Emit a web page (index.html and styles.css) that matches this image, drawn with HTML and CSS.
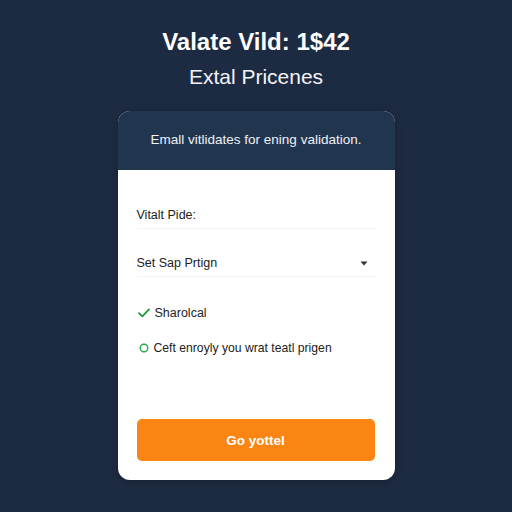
FILE: index.html
```html
<!DOCTYPE html>
<html>
<head>
<meta charset="utf-8">
<link rel="stylesheet" href="styles.css">
</head>
<body>
<div class="page">
  <h1 class="title">Valate Vild: 1$42</h1>
  <p class="subtitle">Extal Pricenes</p>
  <div class="card">
    <div class="card-head">Emall vitlidates for ening validation.</div>
    <div class="card-body">
      <div class="field">Vitalt Pide:</div>
      <div class="field select">
        <span>Set Sap Prtign</span>
        <svg class="chev" width="8" height="5" viewBox="0 0 8 5"><path d="M0.5 0.5 L4 4.5 L7.5 0.5 Z" fill="#333"/></svg>
      </div>
      <div class="check-row">
        <svg width="12" height="10" viewBox="0 0 12 10"><path d="M1 5.2 L4.3 8.4 L11 1.4" fill="none" stroke="#1f9d3a" stroke-width="1.8" stroke-linecap="round" stroke-linejoin="round"/></svg>
        <span>Sharolcal</span>
      </div>
      <div class="check-row circle-row">
        <svg width="10" height="10" viewBox="0 0 10 10"><circle cx="5" cy="5" r="3.8" fill="none" stroke="#2aa84a" stroke-width="1.4"/></svg>
        <span>Ceft enroyly you wrat teatl prigen</span>
      </div>
      <button class="btn">Go yottel</button>
    </div>
  </div>
</div>
</body>
</html>
```
FILE: styles.css
```css
html, body {
  margin: 0;
  padding: 0;
  background: #1d2b42;
  height: 100%;
}
.page {
  width: 512px;
  height: 512px;
  display: flex;
  flex-direction: column;
  align-items: center;
  font-family: "Liberation Sans", Arial, sans-serif;
}
.title {
  margin: 28px 0 0 0;
  font-size: 24px;
  line-height: 28px;
  font-weight: 700;
  color: #ffffff;
}
.subtitle {
  margin: 8px 0 0 0;
  font-size: 21px;
  line-height: 25px;
  color: #f2f4f7;
  font-weight: 400;
}
.card {
  margin-top: 22px;
  width: 277px;
  height: 369px;
  border-radius: 12px;
  overflow: hidden;
  background: #ffffff;
  display: flex;
  flex-direction: column;
  box-shadow: 0 2px 8px rgba(0,0,0,0.25);
}
.card-head {
  height: 59px;
  background: #22354f;
  color: #eef1f5;
  font-size: 13.5px;
  display: flex;
  align-items: center;
  justify-content: center;
  padding-bottom: 2px;
  box-sizing: border-box;
}
.card-body {
  flex: 1;
  padding: 32px 19px 19px 19px;
  display: flex;
  flex-direction: column;
  color: #222;
  font-size: 12.5px;
}
.field {
  height: 26px;
  display: flex;
  align-items: center;
  border-bottom: 1px solid #f3f4f6;
}
.select {
  margin-top: 21px;
  justify-content: space-between;
  padding-right: 8px;
}
.chev { margin-top: 1px; }
.check-row {
  margin-top: 28px;
  display: flex;
  align-items: center;
  gap: 5px;
  height: 16px;
}
.check-row svg { margin-left: 1px; }
.circle-row {
  margin-top: 19px;
  gap: 5px;
}
.circle-row svg { margin-left: 2px; }
.circle-row span { font-size: 12.2px; }
.btn {
  margin-top: auto;
  height: 42px;
  width: 238px;
  border: none;
  border-radius: 5px;
  background: #fb8513;
  color: #ffffff;
  font-family: "Liberation Sans", Arial, sans-serif;
  font-size: 13.5px;
  font-weight: 700;
}
```
